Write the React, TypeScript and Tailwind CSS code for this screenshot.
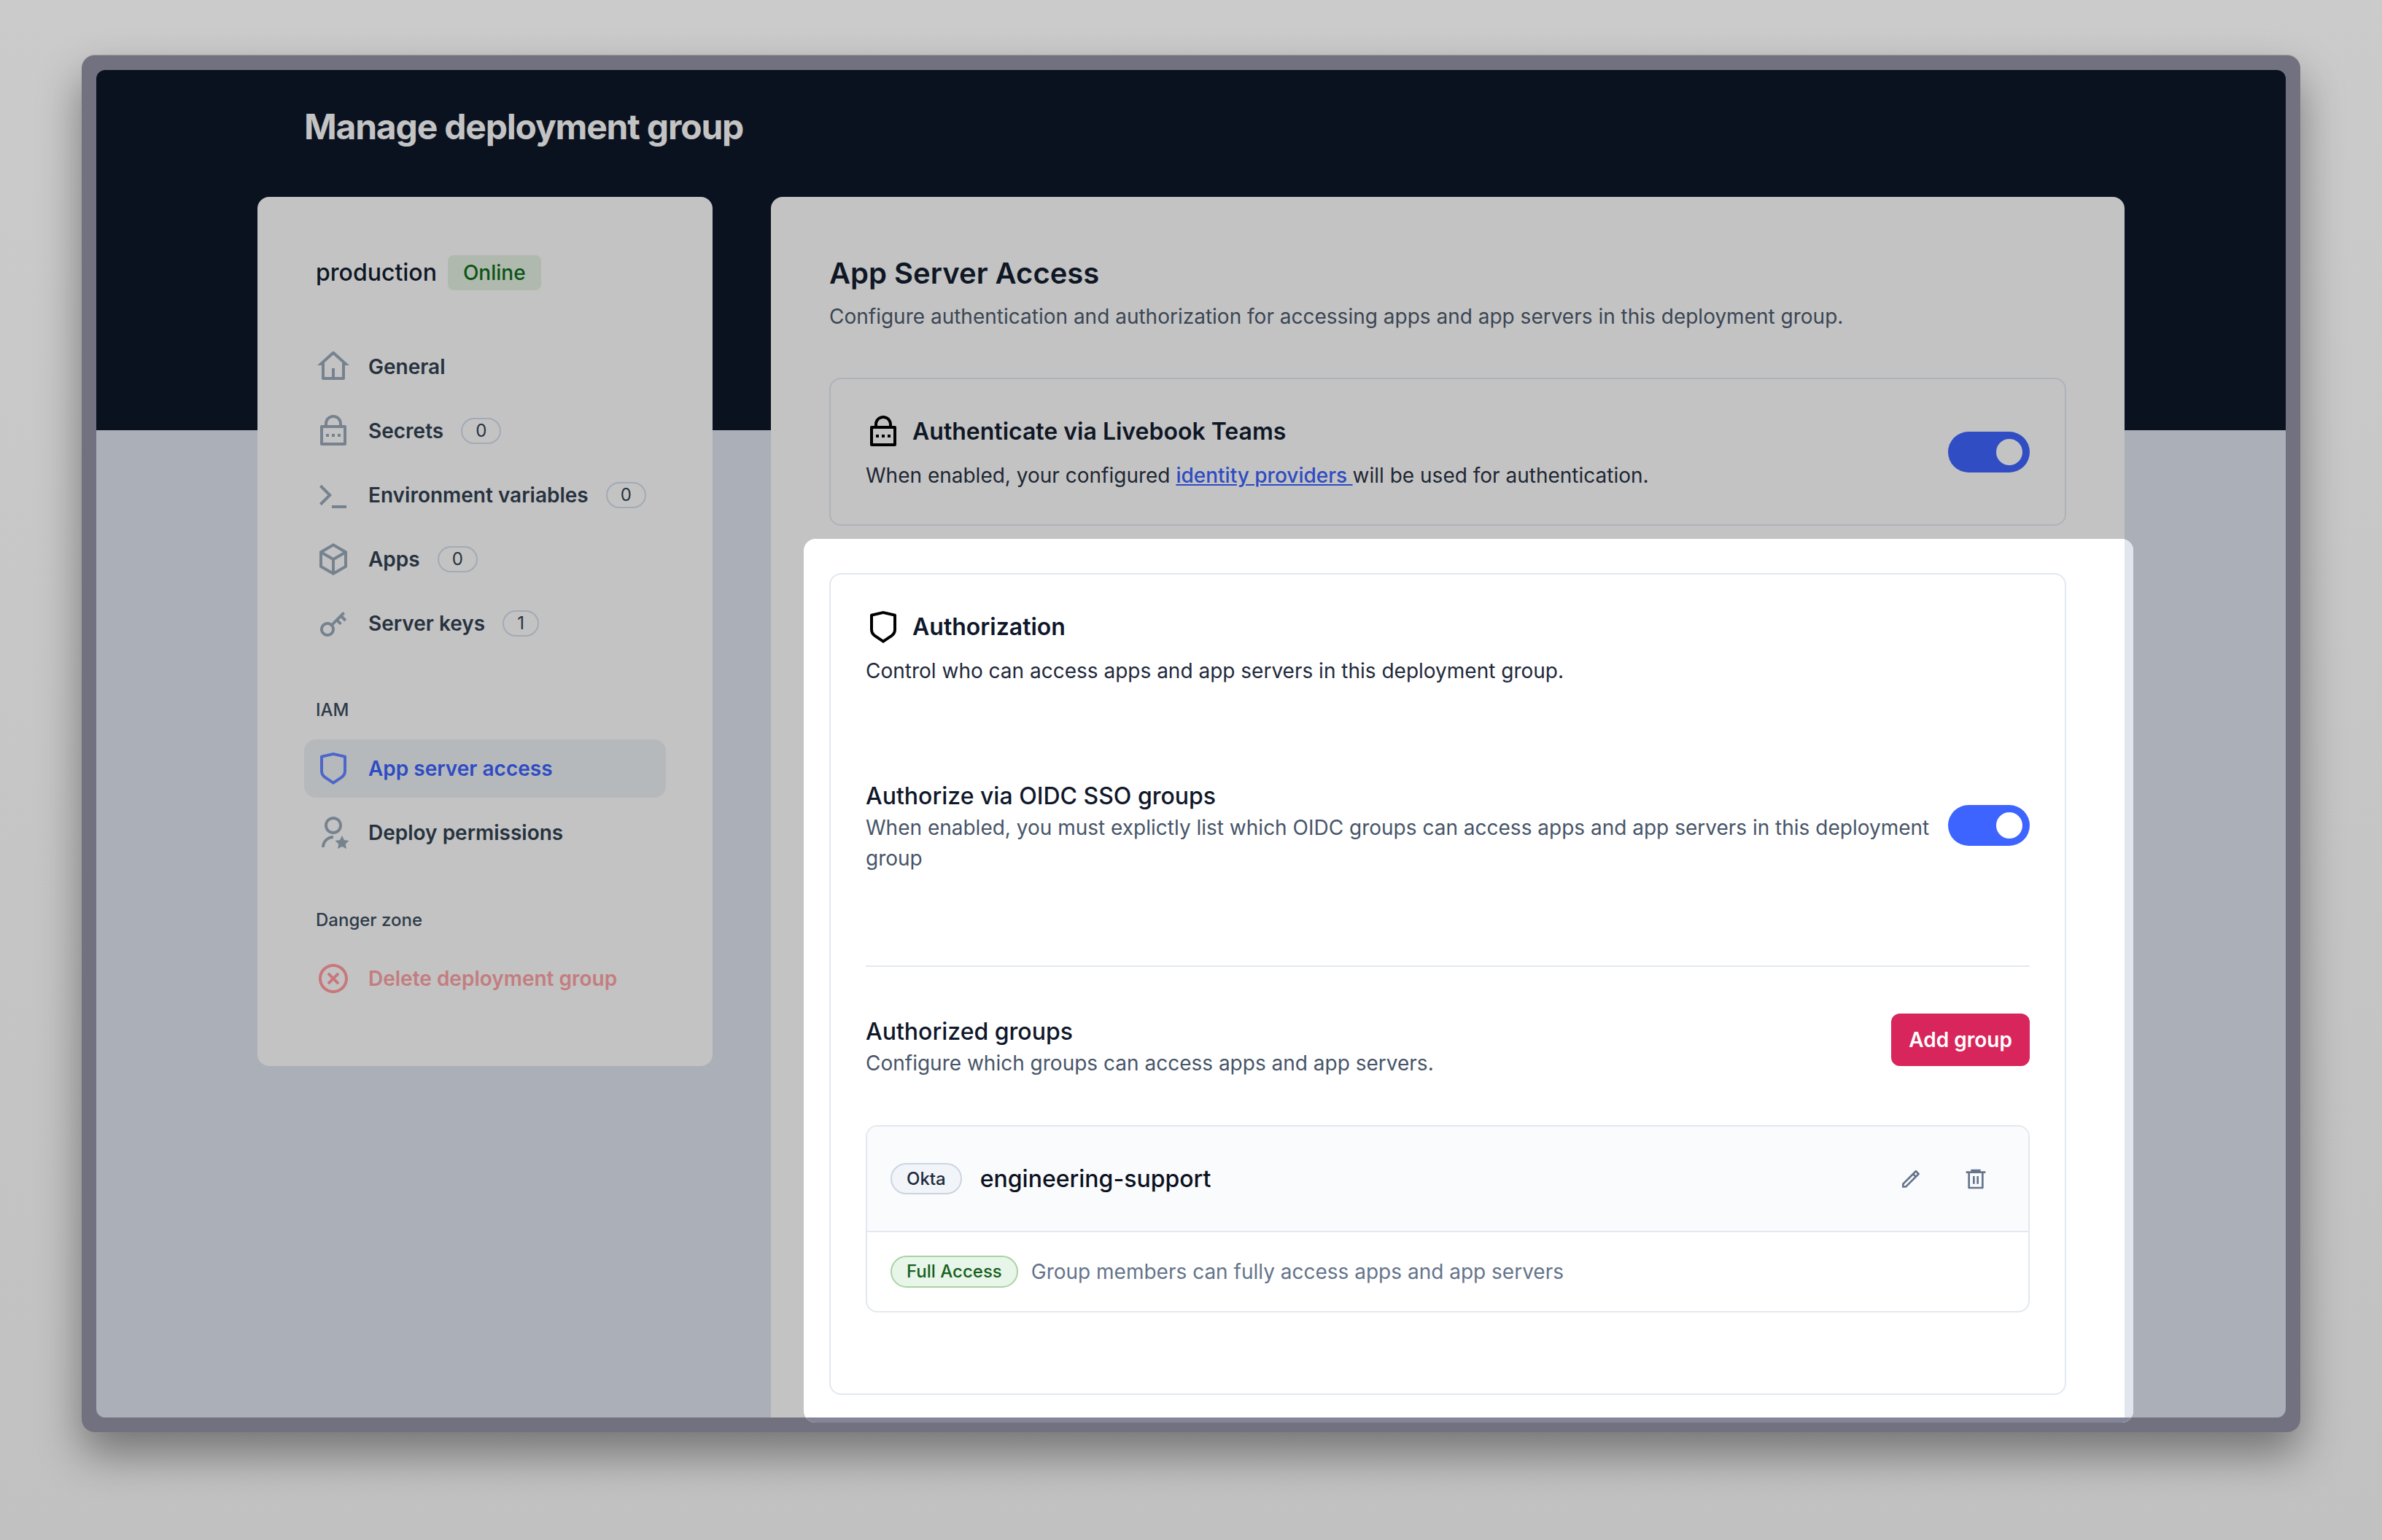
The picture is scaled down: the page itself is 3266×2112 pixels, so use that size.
import React from 'react';
import {
  RiHome4Line,
  RiLockPasswordLine,
  RiTerminalLine,
  RiBox3Line,
  RiKey2Line,
  RiShieldLine,
  RiUserStarLine,
  RiCloseCircleLine,
  RiPencilLine,
  RiDeleteBin6Line,
} from 'react-icons/ri';

const NavRow = ({ icon: Icon, label, count, className = '' }: any) => (
  <div className={`flex h-[88px] items-center pl-[16px] text-[28px] font-semibold text-[#27323f] ${className}`}>
    <Icon size={48} className="shrink-0 text-[#76838f]" />
    <span className="ml-[24px]">{label}</span>
    {count !== undefined && (
      <span className="ml-[24px] flex h-[36px] items-center rounded-full border-2 border-[#a3aab6] px-[18px] text-[24px] font-normal text-[#27323f]">
        {count}
      </span>
    )}
  </div>
);

const Toggle = ({ track, knob, className = '' }: { track: string; knob: string; className?: string }) => (
  <div className={`flex h-[56px] w-[112px] shrink-0 items-center justify-end rounded-full pr-[10px] ${track} ${className}`}>
    <div className={`h-[36px] w-[36px] rounded-full ${knob}`} />
  </div>
);

export default function App() {
  return (
    <div className="h-[2112px] w-[3266px] overflow-hidden bg-linear-to-b from-[#cbcbcb] to-[#c1c1c1] pl-[112px] pt-[76px] font-[Inter,sans-serif]">
      <div className="relative h-[1888px] w-[3042px] rounded-[18px] bg-[#72717f] p-[20px] shadow-[0_-1px_0_#a0a0a0,0_30px_60px_rgba(0,0,0,0.4)]">
        <div className="relative h-full rounded-[12px] bg-[#abafb7]">
          <div className="absolute inset-x-0 top-0 h-[494px] rounded-t-[12px] bg-[#0a1220]" />
          <div className="relative flex h-full flex-col">
            <h1 className="ml-[285px] flex h-[174px] items-center pb-[18px] text-[48px] font-bold tracking-[-0.025em] text-[#c3c3c3]">
              Manage deployment group
            </h1>
            <div className="flex min-h-0 flex-1 items-start gap-[80px] pl-[221px]">
              {/* sidebar */}
              <div className="h-[1192px] w-[624px] rounded-[16px] bg-[#c3c3c3] px-[64px] pt-[80px]">
                <div className="ml-[16px] flex h-[48px] items-center">
                  <span className="text-[32px] font-medium text-[#0f1725]">production</span>
                  <span className="ml-[15px] flex h-[48px] items-center rounded-[8px] bg-[#b0b9ae] px-[21px] text-[28px] font-medium text-[#0b5415]">
                    Online
                  </span>
                </div>
                <div className="mt-[61px]">
                  <NavRow icon={RiHome4Line} label="General" />
                  <NavRow icon={RiLockPasswordLine} label="Secrets" count={0} />
                  <NavRow icon={RiTerminalLine} label="Environment variables" count={0} />
                  <NavRow icon={RiBox3Line} label="Apps" count={0} />
                  <NavRow icon={RiKey2Line} label="Server keys" count={1} />
                </div>
                <div className="ml-[16px] mt-[57px] text-[24px] font-medium text-[#2f3b4a]">IAM</div>
                <div className="mt-[22px] flex h-[80px] items-center rounded-[16px] bg-[#b5b9bc] pl-[16px] text-[28px] font-semibold text-[#2e4bc4]">
                  <RiShieldLine size={48} className="text-[#4d66c9]" />
                  <span className="ml-[24px]">App server access</span>
                </div>
                <NavRow icon={RiUserStarLine} label="Deploy permissions" className="mt-[4px]" />
                <div className="ml-[16px] mt-[58px] text-[24px] font-medium text-[#2f3b4a]">Danger zone</div>
                <div className="mt-[38px] flex h-[48px] items-center pl-[16px] text-[28px] font-semibold text-[#c37d80]">
                  <RiCloseCircleLine size={48} className="text-[#c8787c]" />
                  <span className="ml-[24px]">Delete deployment group</span>
                </div>
              </div>

              {/* main panel */}
              <div className="flex h-full w-[1856px] flex-col rounded-t-[16px] bg-[#c3c3c3] px-[80px] pt-[80px]">
                <h2 className="text-[40px] font-semibold leading-[50px] text-[#0f1725]">App Server Access</h2>
                <p className="mt-[14px] text-[28px] leading-[40px] text-[#3b4654]">
                  Configure authentication and authorization for accessing apps and app servers in this deployment group.
                </p>
                <div className="mt-[64px] flex h-[203px] items-center justify-between rounded-[16px] border-2 border-[#aeb2b9] pl-[48px] pr-[48px]">
                  <div>
                    <div className="flex items-center text-[32px] font-semibold text-[#0f1725]">
                      <RiLockPasswordLine size={48} className="text-black" />
                      <span className="ml-[16px]">Authenticate via Livebook Teams</span>
                    </div>
                    <p className="mt-[16px] text-[28px] leading-[40px] text-[#1e2733]">
                      When enabled, your configured{' '}
                      <span className="font-medium text-[#2e4bc4] underline">identity providers </span>
                      will be used for authentication.
                    </p>
                  </div>
                  <Toggle track="bg-[#304dc3]" knob="bg-[#c3c3c3]" />
                </div>

                {/* highlighted section */}
                <div className="relative -mb-[7px] -ml-[35px] -mr-[92px] mt-[18px] flex-1 overflow-hidden rounded-[16px] bg-white pb-[38px] pl-[35px] pr-[92px] pt-[47px]">
                  <div className="absolute inset-y-0 right-0 w-[12px] bg-[#e0e5ee]" />
                  <div className="absolute inset-x-0 bottom-0 h-[7px] bg-[#85859a]" />
                  <div className="h-full rounded-[16px] border-2 border-[#e2e8f0] px-[48px] pt-[48px]">
                    <div className="flex items-center text-[32px] font-semibold text-[#0f172a]">
                      <RiShieldLine size={48} className="text-black" />
                      <span className="ml-[16px]">Authorization</span>
                    </div>
                    <p className="mt-[16px] text-[28px] leading-[40px] text-[#1e293b]">
                      Control who can access apps and app servers in this deployment group.
                    </p>

                    <div className="mt-[130px] flex items-center justify-between border-b-2 border-[#e2e8f0] pb-[126px]">
                      <div className="w-[1480px]">
                        <div className="text-[32px] font-medium leading-[44px] text-[#0f172a]">Authorize via OIDC SSO groups</div>
                        <p className="text-[28px] leading-[42px] text-[#475569]">
                          When enabled, you must explictly list which OIDC groups can access apps and app servers in this deployment group
                        </p>
                      </div>
                      <Toggle track="bg-[#3e64ff]" knob="bg-white" className="mb-[4px]" />
                    </div>

                    <div className="mt-[64px] flex items-start justify-between">
                      <div className="pt-[3px]">
                        <div className="text-[32px] font-medium leading-[44px] text-[#0f172a]">Authorized groups</div>
                        <p className="text-[28px] leading-[42px] text-[#475569]">
                          Configure which groups can access apps and app servers.
                        </p>
                      </div>
                      <button className="h-[72px] rounded-[12px] bg-[#d8255b] px-[24px] text-[28px] font-semibold text-white">
                        Add group
                      </button>
                    </div>

                    <div className="mt-[64px] overflow-hidden rounded-[16px] border-2 border-[#e2e8f0]">
                      <div className="flex h-[145px] items-center justify-between border-b-2 border-[#e2e8f0] bg-[#fafbfd] pl-[32px] pr-[56px]">
                        <div className="flex items-center">
                          <span className="flex h-[43px] items-center rounded-full border-2 border-[#cbd5e1] bg-[#f1f5f9] px-[20px] text-[24px] font-medium text-[#1e293b]">
                            Okta
                          </span>
                          <span className="ml-[25px] text-[32px] font-medium text-[#0b1220]">engineering-support</span>
                        </div>
                        <div className="flex items-center gap-[57px] text-[#64748b]">
                          <RiPencilLine size={32} />
                          <RiDeleteBin6Line size={32} />
                        </div>
                      </div>
                      <div className="flex h-[108px] items-center pl-[32px]">
                        <span className="flex h-[44px] items-center rounded-full border-2 border-[#a7d3a3] bg-[#e8f5e9] px-[20px] text-[24px] font-medium text-[#14601c]">
                          Full Access
                        </span>
                        <span className="ml-[18px] text-[28px] text-[#64748b]">Group members can fully access apps and app servers</span>
                      </div>
                    </div>
                  </div>
                </div>
              </div>
            </div>
          </div>
        </div>
      </div>
    </div>
  );
}
